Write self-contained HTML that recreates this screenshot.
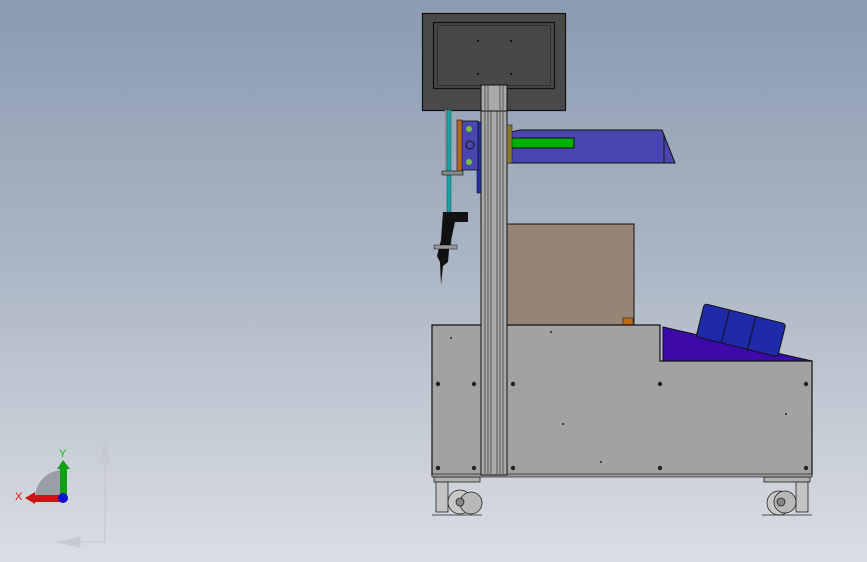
<!DOCTYPE html>
<html><head><style>
html,body{margin:0;padding:0}
body{width:867px;height:562px;overflow:hidden;background:linear-gradient(180deg,#8b9bb0 0%,#a9b5c4 45%,#c9cfd8 80%,#dadee4 100%);font-family:"Liberation Sans",sans-serif}
svg{position:absolute;left:0;top:0}
</style></head><body>
<svg width="867" height="562" viewBox="0 0 867 562">
<!-- faint triad -->
<g stroke="#c4c8ce" fill="#c4c8ce" opacity="0.8">
<line x1="105" y1="445" x2="105" y2="542" stroke-width="1.5"/>
<line x1="55" y1="542" x2="105" y2="542" stroke-width="1.5"/>
<polygon points="100,462 105,442 110,462"/>
<polygon points="58,542 80,537 80,547"/>
</g>
<!-- triad -->
<path d="M63,498 L35,498 A28,28 0 0 1 63,470 Z" fill="#9a9ea6"/>
<rect x="60" y="468" width="7" height="30" fill="#14a014"/>
<polygon points="57,469 63,460 70,469" fill="#14a014"/>
<rect x="34" y="495" width="29" height="7" fill="#c81414"/>
<polygon points="35,492 25,498 35,504" fill="#c81414"/>
<circle cx="63" cy="498" r="5" fill="#1010d0"/>
<text x="59" y="457" font-size="11" fill="#10c010">Y</text>
<text x="15" y="500" font-size="11" fill="#e01010">X</text>

<!-- casters -->
<g stroke="#222" stroke-width="0.8">
<rect x="434" y="477" width="46" height="5" fill="#b0b0b0"/>
<rect x="436" y="482" width="12" height="30" fill="#c4c4c4"/>
<circle cx="460" cy="502" r="12" fill="#c8c8c8"/>
<circle cx="471" cy="503" r="11" fill="#b8b8b8"/>
<circle cx="460" cy="502" r="4" fill="#888"/>
<line x1="432" y1="515" x2="482" y2="515"/>
<rect x="764" y="477" width="46" height="5" fill="#b0b0b0"/>
<rect x="796" y="482" width="12" height="30" fill="#c4c4c4"/>
<circle cx="779" cy="503" r="12" fill="#c8c8c8"/>
<circle cx="785" cy="502" r="11" fill="#b8b8b8"/>
<circle cx="781" cy="502" r="4" fill="#888"/>
<line x1="762" y1="515" x2="812" y2="515"/>
</g>

<!-- brown box -->
<rect x="507" y="224" width="127" height="102" fill="#968475" stroke="#111" stroke-width="1"/>
<rect x="623" y="318" width="10" height="7" fill="#c06a10" stroke="#222" stroke-width="0.6"/>

<!-- purple wedge -->
<polygon points="663,327 812,361 663,361" fill="#3c0aa8" stroke="#111" stroke-width="1"/>
<g transform="rotate(14 740 330)">
<rect x="699" y="313" width="84" height="34" rx="3" fill="#1e2aa8" stroke="#111" stroke-width="1"/>
<line x1="725" y1="313" x2="725" y2="347" stroke="#111"/>
<line x1="752" y1="313" x2="752" y2="347" stroke="#111"/>
</g>

<!-- base -->
<path d="M432,325 L660,325 L660,361 L812,361 L812,475 L432,475 Z" fill="#a2a2a2" stroke="#111" stroke-width="1.2"/>
<rect x="432" y="474" width="380" height="3" fill="#9a9a9a" stroke="#111" stroke-width="0.6"/>
<g fill="#222">
<circle cx="438" cy="384" r="2.2"/><circle cx="474" cy="384" r="2.2"/><circle cx="513" cy="384" r="2.2"/><circle cx="660" cy="384" r="2.2"/><circle cx="806" cy="384" r="2.2"/>
<circle cx="438" cy="468" r="2.2"/><circle cx="474" cy="468" r="2.2"/><circle cx="513" cy="468" r="2.2"/><circle cx="660" cy="468" r="2.2"/><circle cx="806" cy="468" r="2.2"/>
<circle cx="551" cy="332" r="1"/><circle cx="563" cy="424" r="1"/><circle cx="601" cy="462" r="1"/><circle cx="786" cy="414" r="1"/><circle cx="451" cy="338" r="1"/>
</g>

<!-- column -->
<rect x="481" y="85" width="26" height="390" fill="#a9a9a9" stroke="#111" stroke-width="1"/>
<g stroke="#333" stroke-width="0.7">
<line x1="485" y1="85" x2="485" y2="474"/><line x1="488" y1="85" x2="488" y2="474"/><line x1="491" y1="85" x2="491" y2="474"/>
<line x1="497" y1="85" x2="497" y2="474"/><line x1="500" y1="85" x2="500" y2="474"/><line x1="503" y1="85" x2="503" y2="474"/>
</g>

<!-- monitor -->
<rect x="422.5" y="13.5" width="143" height="97" fill="#494949" stroke="#111" stroke-width="1.2"/>
<rect x="433.5" y="22.5" width="121" height="66" fill="#474747" stroke="#111" stroke-width="1.2"/>
<rect x="437.5" y="25.5" width="113" height="60" fill="#484848" stroke="#2a2a2a" stroke-width="0.8"/>
<g fill="#111"><rect x="477" y="40" width="2" height="2"/><rect x="510" y="40" width="2" height="2"/><rect x="477" y="73" width="2" height="2"/><rect x="510" y="73" width="2" height="2"/></g>
<rect x="481" y="85" width="26" height="26" fill="#a9a9a9" stroke="#111"/>
<g stroke="#333" stroke-width="0.7"><line x1="485" y1="85" x2="485" y2="110"/><line x1="488" y1="85" x2="488" y2="110"/><line x1="500" y1="85" x2="500" y2="110"/><line x1="503" y1="85" x2="503" y2="110"/></g>

<!-- arm -->
<polygon points="520,130 662,130 675,163 507,163 507,133" fill="#4a46b0" stroke="#111" stroke-width="1"/>
<line x1="664" y1="134" x2="664" y2="163" stroke="#111"/>
<rect x="507" y="138" width="67" height="10" fill="#00b000" stroke="#111" stroke-width="1"/>
<rect x="507" y="125" width="5" height="38" fill="#8a7a30" stroke="#222" stroke-width="0.6"/>

<!-- bracket -->
<rect x="477" y="122" width="4" height="71" fill="#2030b0" stroke="#111" stroke-width="0.6"/>
<rect x="460" y="121" width="18" height="49" fill="#4a46b0" stroke="#111" stroke-width="0.8"/>
<rect x="457" y="120" width="5" height="52" fill="#b06820" stroke="#111" stroke-width="0.6"/>
<circle cx="469" cy="129" r="3" fill="#7ac040"/><circle cx="469" cy="162" r="3" fill="#7ac040"/>
<circle cx="470" cy="145" r="4" fill="none" stroke="#111"/>
<!-- rod -->
<rect x="445" y="110" width="6" height="62" fill="#909090"/>
<rect x="447" y="110" width="4" height="135" fill="#20a0a0" stroke="#155" stroke-width="0.5"/>
<rect x="442" y="171" width="21" height="4" fill="#888" stroke="#111" stroke-width="0.6"/>
<!-- handle -->
<path d="M443,212 L468,212 L468,222 L455,222 L449,250 L448,262 L443,266 L441,285 L440,262 L437,256 L441,240 Z" fill="#111"/>
<rect x="434" y="245" width="23" height="4" fill="#999" stroke="#111" stroke-width="0.5"/>
</svg>
</body></html>
